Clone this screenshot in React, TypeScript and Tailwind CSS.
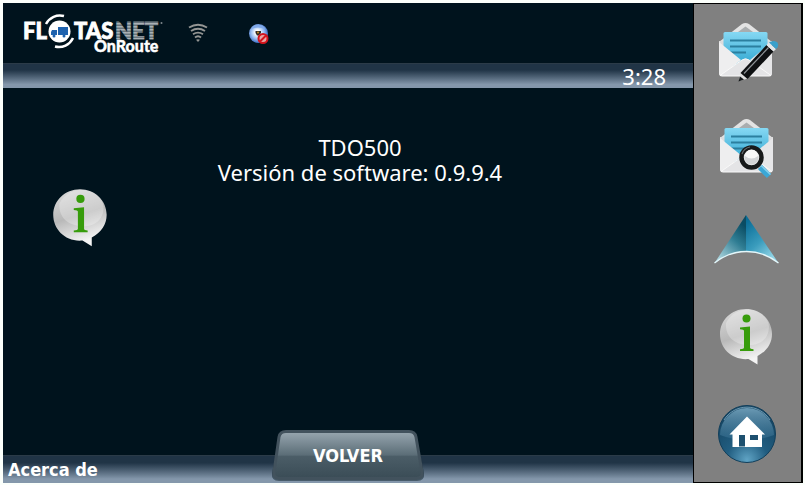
import React from 'react';

function Envelope() {
  return (
    <g>
      <path d="M7 26 L30 8 Q33.500 6 37 8 L60 26 Z" fill="#e3e3e3" />
      <path d="M26 16 L33.500 10.500 L41 16 Z" fill="#a9adaf" />
      <path d="M7 25 V57 Q7 60 10 60 H57 Q60 60 60 57 V25 Z" fill="#dcdcdd" />
      <rect x="11.500" y="16" width="44" height="34" rx="1.500" fill="url(#paper)" />
      <path d="M18 24.500 H49 M18 30.500 H49 M18 36.500 H34" stroke="#2b7f9f" strokeWidth="2.200" />
      <path d="M7 26 L29 44 L9 60 Q7 60 7 57 Z" fill="#eeeeef" />
      <path d="M60 26 L38 44 L58 60 Q60 60 60 57 Z" fill="#e6e6e8" />
      <path d="M8 59.500 L30 44 Q33.500 41.500 37 44 L59 59.500 Q58 60 57 60 H10 Z" fill="#e4e4e6" stroke="#f9f9f9" strokeWidth="1" />
    </g>
  );
}

function WriteIcon() {
  return (
    <svg viewBox="0 0 72 72" className="size-[72px]" aria-hidden="true">
      <Envelope />
      <path d="M27 65 L29 56 L36 62.500 Z" fill="#dedede" />
      <path d="M26.500 65.500 L28 60.500 L32 63.500 Z" fill="#15191b" />
      <path d="M28.500 57 L54.500 29 L61.500 35.500 L35.500 63 Z" fill="#0e1012" />
      <path d="M32 57.500 L56.500 31.500" stroke="#8d9296" strokeWidth="1.200" />
      <path d="M54.500 29 L57 26.500 L64 33 L61.500 35.500 Z" fill="#e3e6e8" />
      <path d="M57 26.500 L59 25.500 Q63 24 65.500 26.500 Q67 29 65.500 31.500 L64 33 Z" fill="#3aa0cb" />
    </svg>
  );
}

function SearchMailIcon() {
  return (
    <svg viewBox="0 0 72 72" className="size-[72px]" aria-hidden="true">
      <g transform="translate(1 1)">
        <Envelope />
      </g>
      <path d="M48 56 L57 65" stroke="#3ba7d6" strokeWidth="6" />
      <path d="M48.500 54 L58.500 63.500" stroke="#85d0ec" strokeWidth="1.500" />
      <circle cx="39.500" cy="46.500" r="10" fill="#e9ebec" stroke="#17191a" strokeWidth="4.500" />
      <circle cx="39.500" cy="46.500" r="7" fill="#d3d5d7" />
      <path d="M33 45 A6.500 6.500 0 0 1 46 45 Q39.500 50 33 45 Z" fill="#f8f8f8" />
      <path d="M30 43 A10.500 10.500 0 0 1 38 36" fill="none" stroke="#666b6e" strokeWidth="1.200" />
    </svg>
  );
}

function ArrowIcon() {
  return (
    <svg viewBox="0 0 72 72" className="size-[72px]" aria-hidden="true">
      <path d="M34 8 L2.500 56 Q17 44.500 34.500 44.500 Z" fill="url(#arrowLeft)" />
      <path d="M34 8 L66.500 56 Q52 44.500 34 44.500 Z" fill="url(#arrowRight)" />
      <path d="M2.500 56 Q17 44.500 34.500 44.500 Q52 44.500 66.500 56" fill="none" stroke="#e4f7fb" strokeWidth="1.300" />
    </svg>
  );
}

function InfoIcon({ className }: { className: string }) {
  return (
    <svg viewBox="0 0 72 72" className={className} aria-hidden="true">
      <path d="M34 6 C48.500 6 60 17 60 31 C60 40.500 54.500 48.500 45.500 53 L45.500 61.500 L36.500 56 C20 57.500 8 45.500 8 31 C8 17 19.500 6 34 6 Z" fill="url(#bubble)" />
      <path d="M14 20 C19 10 28 6.500 35 6.500 C47 6.500 56 14 57 23 C57 37 47 42 37 42 C23 42 13 34 14 20 Z" fill="#fff" opacity="0.28" />
      <circle cx="34.500" cy="15.500" r="4" fill="#379c0b" />
      <path d="M28 24.500 L38 23.500 V44.500 Q38 46 41.500 46.200 V48 H28 V46.200 Q32 46 32 44.500 V28 Q32 26.500 28 26.300 Z" fill="#379c0b" />
    </svg>
  );
}

function HomeIcon() {
  return (
    <svg viewBox="0 0 72 72" className="size-[72px]" aria-hidden="true">
      <circle cx="35" cy="36" r="28.500" fill="url(#home)" stroke="#123f5b" strokeWidth="1" />
      <path d="M8 37 A27 27 0 0 1 62 37 Q48 42 35 42 Q21 42 8 37 Z" fill="url(#gloss)" />
      <path d="M12 22 A27 27 0 0 1 58 22" fill="none" stroke="#a9cfe2" strokeWidth="1" opacity="0.6" />
      <path d="M35 18.500 L53 36.500 H50 V49 H20.500 V36.500 H17.500 Z" fill="#fff" />
      <rect x="27" y="37" width="6" height="11.500" fill="#1d506f" />
      <rect x="38" y="37" width="8" height="5" fill="#1d506f" />
    </svg>
  );
}

function Gradients() {
  return (
    <svg className="absolute size-0" aria-hidden="true">
      <defs>
        <linearGradient id="paper" x1="0" y1="0" x2="0" y2="1">
          <stop offset="0" stopColor="#86d8f3" />
          <stop offset="1" stopColor="#2ea5d0" />
        </linearGradient>
        <linearGradient id="arrowLeft" x1="0.900" y1="0" x2="0.300" y2="1">
          <stop offset="0.150" stopColor="#0a4c63" />
          <stop offset="0.500" stopColor="#2f7d93" />
          <stop offset="1" stopColor="#a9d3dc" />
        </linearGradient>
        <linearGradient id="arrowRight" x1="0" y1="0" x2="0.600" y2="1">
          <stop offset="0.100" stopColor="#0a6d97" />
          <stop offset="0.600" stopColor="#3a9cbd" />
          <stop offset="1" stopColor="#8fd3e5" />
        </linearGradient>
        <linearGradient id="bubble" x1="0" y1="0" x2="0.300" y2="1">
          <stop offset="0" stopColor="#dcdcdc" />
          <stop offset="0.550" stopColor="#b9b9b9" />
          <stop offset="1" stopColor="#f4f4f4" />
        </linearGradient>
        <radialGradient id="home" cx="0.500" cy="0.950" r="0.800">
          <stop offset="0" stopColor="#5fa3c4" />
          <stop offset="0.450" stopColor="#215d80" />
          <stop offset="1" stopColor="#164765" />
        </radialGradient>
        <linearGradient id="gloss" x1="0" y1="0" x2="0" y2="1">
          <stop offset="0" stopColor="#8fbdd6" stopOpacity="0.700" />
          <stop offset="1" stopColor="#3d7698" stopOpacity="0.400" />
        </linearGradient>
        <linearGradient id="tab" x1="0" y1="0" x2="0" y2="1">
          <stop offset="0" stopColor="#98a7b0" />
          <stop offset="0.500" stopColor="#5b6d77" />
          <stop offset="0.530" stopColor="#4b5d67" />
          <stop offset="1" stopColor="#3a4c56" />
        </linearGradient>
        <radialGradient id="globe" cx="0.450" cy="0.450" r="0.600">
          <stop offset="0.200" stopColor="#ffffff" />
          <stop offset="0.550" stopColor="#9cc0f2" />
          <stop offset="1" stopColor="#2459b8" />
        </radialGradient>
        <pattern id="stripes" width="4" height="3" patternUnits="userSpaceOnUse">
          <rect width="4" height="3" fill="#68747c" />
          <rect width="4" height="1.500" fill="#aab1b5" />
        </pattern>
      </defs>
    </svg>
  );
}

function Logo() {
  return (
    <svg viewBox="0 0 144 44" className="h-11 w-36 font-[family-name:Lato] font-black" role="img" aria-label="FlotasNet OnRoute">
      <text x="0" y="28" fontSize="22" fill="#fff" stroke="#fff" strokeWidth="0.800">FL</text>
      <text x="51" y="28" fontSize="22" fill="#fff" stroke="#fff" strokeWidth="0.800">TAS</text>
      <text x="92" y="28" fontSize="22" fill="url(#stripes)" stroke="url(#stripes)" strokeWidth="0.800">NET</text>
      <circle cx="138.500" cy="12" r="1" fill="#7d878d" />
      <circle cx="36.500" cy="20.500" r="11" fill="#fff" />
      <path d="M23 13 A15.500 15.500 0 0 1 41 5" fill="none" stroke="#fff" strokeWidth="2.500" />
      <path d="M50 27 A15.500 15.500 0 0 1 32 35.500" fill="none" stroke="#fff" strokeWidth="2.500" />
      <path d="M35 16 H45 V24 H35 Z M29 19 H34 V24 H28 V21 Z" fill="#1e62ae" />
      <circle cx="31" cy="25" r="1.500" fill="#1e62ae" />
      <circle cx="41" cy="25" r="1.500" fill="#1e62ae" />
      <text x="71" y="41" fontSize="16" fill="#fff" stroke="#fff" strokeWidth="0.400">OnRoute</text>
    </svg>
  );
}

function WifiIcon() {
  return (
    <svg viewBox="0 0 20 20" className="size-5" fill="none" stroke="#949694" strokeWidth="1.900" role="img" aria-label="Wi-Fi">
      <path d="M1 4.500 Q10 -1 19 4.500 M3 8 Q10 3.500 17 8 M5 11.200 Q10 8 15 11.200 M7 14.500 Q10 12 13 14.500" />
      <path d="M8 16.800 Q10 15.500 12 16.800 L10 19 Z" fill="#949694" stroke="none" />
    </svg>
  );
}

function OfflineIcon() {
  return (
    <svg viewBox="0 0 22 22" className="size-[22px]" role="img" aria-label="Sin conexión">
      <circle cx="10.500" cy="11.500" r="9.500" fill="url(#globe)" />
      <path d="M3 7 Q6 2.500 10.500 3 Q15 3 17.500 7 Q10 4 3 7 Z" fill="#7fa9ea" />
      <path d="M7.500 9 H13 V11 L11 13.500 H9 L7.500 11 Z" fill="#332b25" />
      <circle cx="10" cy="10.500" r="1" fill="#c98c2b" />
      <circle cx="15" cy="16.500" r="4.500" fill="#e8a6a6" stroke="#d4141c" strokeWidth="2" />
      <path d="M12 19.500 L18 13.500" stroke="#d4141c" strokeWidth="2" />
    </svg>
  );
}

const actions = [
  { label: 'Escribir mensaje', icon: <WriteIcon /> },
  { label: 'Ver mensajes', icon: <SearchMailIcon /> },
  { label: 'Navegación', icon: <ArrowIcon /> },
  { label: 'Información', icon: <InfoIcon className="size-[72px]" /> },
  { label: 'Inicio', icon: <HomeIcon /> },
];

const bar = 'bg-linear-to-b from-[#203446] from-25% to-[#8497ab] to-85%';

export default function App() {
  return (
    <div className="flex min-h-screen bg-[#fbfffb] pt-[3px] pr-[2px] pb-[2px] pl-[3px] font-['Noto_Sans',sans-serif] text-white">
      <Gradients />
      <div className="flex min-w-0 flex-1 flex-col bg-[#00131d]">
        <header className="flex h-[60px] items-center pl-5">
          <Logo />
          <div className="ml-[21px] flex items-center gap-10">
            <WifiIcon />
            <OfflineIcon />
          </div>
        </header>
        <div className={`flex h-[25px] items-center justify-end border-t border-[#2b3b48] pr-[27px] text-[22px] leading-6 ${bar}`}>
          <time>3:28</time>
        </div>

        <main className="flex-1 pt-[47px]">
          <div className="pl-6 text-center text-[22px] leading-[25px]">
            <h1>TDO500</h1>
            <p>Versión de software: 0.9.9.4</p>
          </div>
          <InfoIcon className="-mt-0.5 ml-[42px] size-[74px]" />
        </main>

        <footer className={`relative flex h-7 items-center border-t border-[#2b3b48] pl-[5px] font-['DejaVu_Sans_Condensed','DejaVu_Sans',sans-serif] text-[18px] font-bold ${bar}`}>
          <span>Acerca de</span>
          <button type="button" className="absolute bottom-0 left-1/2 h-14 w-40 -translate-x-1/2 cursor-pointer font-bold">
            <svg viewBox="0 0 160 56" className="absolute inset-0 size-full" aria-hidden="true">
              <path d="M12 9 Q13 2 20 2 H140 Q147 2 148 9 L156 46 Q157 54 149 54 H11 Q3 54 4 46 Z" fill="#00131d" opacity="0.45" />
              <path d="M11 10 Q12 4.500 18 4.500 H141 Q147 4.500 148 10 L154 45 Q155 51.500 148 51.500 H12 Q5 51.500 6 45 Z" fill="url(#tab)" stroke="#42525d" strokeWidth="3" />
            </svg>
            <span className="relative">VOLVER</span>
          </button>
        </footer>
      </div>

      <nav className="flex w-[110px] flex-col border border-r-2 border-black bg-[#808080]">
        {actions.map((action) => (
          <button key={action.label} type="button" aria-label={action.label} className="flex flex-1 cursor-pointer items-center justify-center">
            {action.icon}
          </button>
        ))}
      </nav>
    </div>
  );
}
